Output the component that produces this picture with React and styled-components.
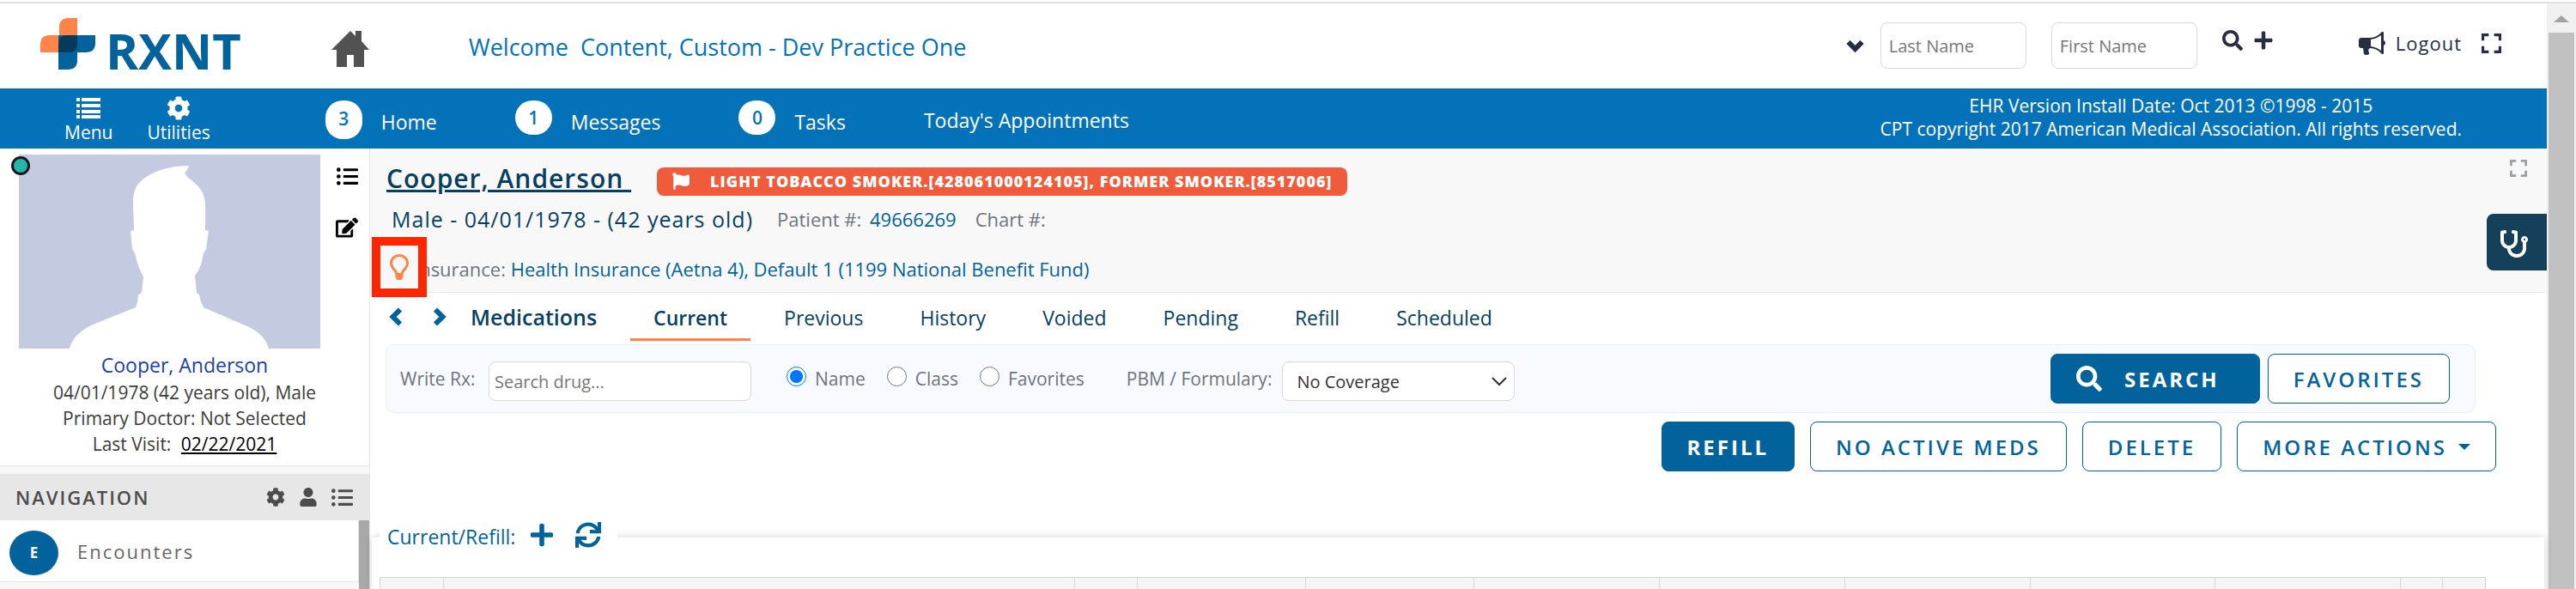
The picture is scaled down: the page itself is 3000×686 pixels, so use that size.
import React from "react";
import styled, { createGlobalStyle } from "styled-components";
import {
  FaCog,
  FaEdit,
  FaFlag,
  FaListUl,
  FaPlus,
  FaSearch,
  FaStethoscope,
  FaSync,
  FaUser,
} from "react-icons/fa";

const GlobalStyle = createGlobalStyle`
  * {
    box-sizing: border-box;
  }
  body {
    margin: 0;
    font-family: "Open Sans", "Noto Sans", sans-serif;
    font-size: 20px;
    color: #3c3c3c;
    background: white;
  }
  button, input, select {
    font-family: inherit;
    font-size: inherit;
  }
  a {
    color: inherit;
    text-decoration: none;
  }
  svg {
    display: block;
    flex-shrink: 0;
  }
`;

const Window = styled.div`
  display: flex;
  height: 100vh;
  overflow: hidden;
  padding-top: 4px;
  background: linear-gradient(white 2px, #dedee6 2px, #dedee6 4px, white 4px);
`;
const Page = styled.div`
  flex: 1;
  min-width: 0;
  display: flex;
  flex-direction: column;
`;

const ScrollTrack = styled.div`
  width: 34px;
  padding: 14px 2px 0;
  display: flex;
  flex-direction: column;
  align-items: center;
  gap: 12px;
  background: #f0f0f0;
`;
const ScrollThumb = styled.div`
  flex: 1;
  width: 100%;
  background: #c1c1c1;
`;

const Header = styled.header`
  height: 99px;
  flex-shrink: 0;
  padding: 0 53px 0 47px;
  display: flex;
  align-items: flex-start;
  color: #262f42;
`;
const Brand = styled.a`
  display: flex;
  gap: 12px;
  margin-top: 17px;
  color: #02639c;
`;
const BrandName = styled.span`
  margin-top: 8px;
  font-size: 58px;
  line-height: 60px;
  font-weight: 700;
`;
const HomeLink = styled.a`
  margin: 32px 0 0 105px;
  color: #525252;
`;
const Welcome = styled.div`
  margin: 30px auto 0 116px;
  font-size: 27px;
  line-height: 42px;
  white-space: pre;
  color: #0472b8;
`;
const PatientSearch = styled.form`
  display: flex;
  align-items: flex-start;
  margin-right: 99px;
`;
const IconButton = styled.button`
  display: flex;
  padding: 0;
  border: none;
  background: none;
  color: ${(props) => props.$color || "inherit"};
  cursor: pointer;
`;
const SearchMore = styled(IconButton)`
  margin: 43px 19px 0 0;
`;
const NameInput = styled.input`
  width: 170px;
  height: 54px;
  margin: 22px 29px 0 0;
  padding: 0 9px;
  border: 1px solid #d9d9d9;
  border-radius: 8px;
  &::placeholder {
    color: #777;
  }
`;
const SearchActions = styled.div`
  display: flex;
  gap: 12px;
  margin-top: 31px;
`;
const Account = styled.div`
  display: flex;
  align-items: center;
  gap: 12px;
  margin-top: 30px;
  height: 32px;
  font-size: 22px;
`;
const Logout = styled.a`
  margin-right: 11px;
  letter-spacing: 1px;
`;

const NavBar = styled.nav`
  height: 70px;
  flex-shrink: 0;
  padding: 0 99px 0 75px;
  display: flex;
  background: #0472b8;
  color: white;
  font-size: 21px;
`;
const Tools = styled.div`
  display: flex;
  gap: 40px;
  margin-right: 134px;
`;
const Tool = styled.a`
  display: flex;
  flex-direction: column;
  align-items: center;
  padding-top: 9px;
  line-height: 28px;
`;
const NavLinks = styled.div`
  display: flex;
  gap: 91px;
  margin-right: auto;
  padding-top: 14px;
`;
const NavLink = styled.a`
  display: flex;
  gap: 22px;
  font-size: 23px;
`;
const Badge = styled.span`
  width: 43px;
  height: ${(props) => (props.$tall ? 45 : 40)}px;
  padding-bottom: ${(props) => (props.$tall ? 3 : 0)}px;
  display: flex;
  align-items: center;
  justify-content: center;
  border-radius: 20px;
  background: white;
  color: #0472b8;
  font-size: 21px;
  font-weight: 600;
`;
const NavText = styled.span`
  padding-top: ${(props) => (props.$plain ? 6 : 8)}px;
  line-height: 34px;
`;
const Copyright = styled.div`
  padding-top: 7px;
  line-height: 27px;
  text-align: center;
`;

const Body = styled.div`
  flex: 1;
  min-height: 0;
  display: flex;
`;

const Sidebar = styled.aside`
  width: 431px;
  flex-shrink: 0;
  display: flex;
  flex-direction: column;
  background: #f7f7f7;
  border-right: 1px solid #e6e6e6;
`;
const PatientCard = styled.section`
  padding: 7px 0 10px;
  background: white;
  border-bottom: 1px solid #e6e6e6;
`;
const PhotoRow = styled.div`
  display: flex;
  padding-left: 22px;
`;
const Photo = styled.div`
  position: relative;
  width: 351px;
  background: #c4cbe0;
`;
const Status = styled.span`
  position: absolute;
  top: 2px;
  left: -9px;
  width: 22px;
  height: 22px;
  border: 3px solid #15171f;
  border-radius: 50%;
  background: #24b5ad;
`;
const PhotoActions = styled.div`
  display: flex;
  flex-direction: column;
  align-items: center;
  gap: 34px;
  margin-left: 18px;
  padding-top: 13px;
`;
const PatientInfo = styled.div`
  font-size: 21px;
  line-height: 30px;
  text-align: center;
`;
const SideName = styled.a`
  display: block;
  padding-top: 2px;
  font-size: 23px;
  line-height: 34px;
  color: #1a3fae;
`;
const VisitLink = styled.a`
  margin-left: 6px;
  color: black;
  text-decoration: underline;
`;
const SideHeader = styled.div`
  height: 54px;
  margin-top: 9px;
  padding: 0 19px 0 18px;
  display: flex;
  align-items: center;
  gap: 16px;
  background: #e7e7e7;
  color: #4c4c4c;
`;
const SideTitle = styled.h2`
  margin: 0 auto 0 0;
  font-size: 22px;
  font-weight: 600;
  letter-spacing: 2px;
`;
const SideScroll = styled.div`
  flex: 1;
  padding-right: 12px;
  background: linear-gradient(to left, #a9a9a9 12px, #f7f7f7 12px);
`;
const SideItem = styled.a`
  height: 72px;
  padding-left: 11px;
  display: flex;
  align-items: center;
  gap: 22px;
  background: white;
  border: solid #e6e6e6;
  border-width: 0 1px 1px 0;
  font-size: 22px;
  letter-spacing: 2px;
  color: #666;
`;
const Initial = styled.span`
  width: 57px;
  height: 52px;
  margin-top: 4px;
  display: flex;
  align-items: center;
  justify-content: center;
  border-radius: 50%;
  background: #02639c;
  color: white;
  font-size: 17px;
  font-weight: 700;
  letter-spacing: 0;
`;

const Main = styled.main`
  flex: 1;
  min-width: 0;
  display: flex;
  flex-direction: column;
`;
const PatientHeader = styled.section`
  position: relative;
  height: 168px;
  flex-shrink: 0;
  padding: 16px 0 0 19px;
  background: #f8f8f8;
  border-bottom: 1px solid #ededed;
  font-size: 22px;
`;
const PatientRow = styled.div`
  display: flex;
  align-items: center;
  height: 44px;
`;
const PatientName = styled.a`
  padding-bottom: 8px;
  font-size: 30px;
  font-weight: 600;
  letter-spacing: 1px;
  white-space: pre;
  text-decoration: underline;
  text-decoration-thickness: 3px;
  color: #063f61;
`;
const Alert = styled.div`
  height: 33px;
  margin-left: 30px;
  padding: 0 18px;
  display: flex;
  align-items: center;
  gap: 24px;
  border-radius: 8px;
  background: #f05b3b;
  color: white;
  font-size: 18px;
  font-weight: 800;
  letter-spacing: 1px;
`;
const Demographics = styled.span`
  margin: 0 28px 0 6px;
  font-size: 25px;
  font-weight: 500;
  letter-spacing: 1px;
  color: #063f61;
`;
const Field = styled.span`
  margin-right: 22px;
  color: #6c757d;
`;
const FieldLink = styled.a`
  margin-left: 4px;
  color: #02639c;
`;
const InsuranceRow = styled.div`
  padding: 20px 0 0 32px;
  line-height: 32px;
  color: #6c757d;
`;
const InsuranceLink = styled.a`
  color: #02639c;
`;
const Highlight = styled.div`
  position: absolute;
  left: 2px;
  top: 103px;
  width: 64px;
  height: 70px;
  display: flex;
  align-items: center;
  justify-content: center;
  border: 10px solid #ff2600;
  background: #f8f8f8;
`;
const ExpandCorner = styled.div`
  position: absolute;
  right: 23px;
  top: 13px;
`;
const ChartTab = styled.button`
  position: absolute;
  right: 0;
  top: 76px;
  width: 70px;
  height: 66px;
  display: flex;
  align-items: center;
  padding: 4px 0 0 16px;
  border: none;
  border-radius: 8px 0 0 8px;
  background: #15405a;
  color: white;
`;

const Tabs = styled.div`
  height: 56px;
  flex-shrink: 0;
  padding-left: 22px;
  display: flex;
  align-items: center;
  color: #063f61;
`;
const Arrows = styled.div`
  display: flex;
  gap: 37px;
  color: #02639c;
`;
const TabsTitle = styled.h1`
  margin: 0 39px 0 28px;
  font-size: 25px;
  line-height: 52px;
  font-weight: 600;
`;
const Tab = styled.a`
  height: 56px;
  margin-right: 12px;
  padding: 0 27px;
  border-bottom: 3px solid ${(props) => (props.$active ? "#ff8447" : "transparent")};
  font-size: 23px;
  font-weight: ${(props) => (props.$active ? 600 : 400)};
  line-height: 58px;
`;

const RxPanel = styled.form`
  height: 80px;
  flex-shrink: 0;
  margin: 4px 83px 0 18px;
  padding: 0 29px 0 16px;
  display: flex;
  align-items: center;
  border: 1px solid #e3effc;
  border-radius: 10px;
  background: #f7faff;
  color: #6c757d;
  font-size: 21px;
`;
const DrugLabel = styled.label`
  min-width: 91px;
`;
const DrugInput = styled.input`
  width: 306px;
  height: 46px;
  margin: 6px 41px 0 12px;
  padding: 0 6px;
  border: 1px solid #d9d9d9;
  border-radius: 8px;
  background: white;
  font-size: 20px;
  &::placeholder {
    color: #777;
  }
`;
const RadioLabel = styled.label`
  display: flex;
  gap: 10px;
  margin-right: 25px;
  line-height: 28px;
`;
const Radio = styled.input`
  appearance: none;
  width: 23px;
  height: 23px;
  margin: 0;
  border: 1px solid #767676;
  border-radius: 50%;
  background: white;
  &:checked {
    border: 1px solid #0075ff;
    background: radial-gradient(#0075ff 7px, white 8px);
  }
`;
const SelectLabel = styled.label`
  display: flex;
  align-items: center;
  gap: 12px;
  margin: 0 auto 0 24px;
`;
const SelectBox = styled.span`
  position: relative;
  margin-top: 6px;
  color: #333;
`;
const Select = styled.select`
  appearance: none;
  width: 271px;
  height: 46px;
  padding: 0 16px;
  display: block;
  border: 1px solid #d9d9d9;
  border-radius: 8px;
  background: white;
  color: #333;
  font-size: 20px;
`;
const SelectArrow = styled.svg`
  position: absolute;
  right: 9px;
  top: 17px;
  pointer-events: none;
`;

const Button = styled.button`
  height: 58px;
  padding: 0 29px;
  display: flex;
  align-items: center;
  gap: 13px;
  border: 1px solid #02639c;
  border-radius: 8px;
  background: ${(props) => (props.$primary ? "#02639c" : "white")};
  color: ${(props) => (props.$primary ? "white" : "#02639c")};
  font-size: 24px;
  font-weight: ${(props) => (props.$primary ? 700 : 600)};
  letter-spacing: 3px;
  white-space: nowrap;
  cursor: pointer;
`;
const SearchButton = styled(Button)`
  margin-right: 9px;
  padding: 0 46px 0 29px;
  gap: 26px;
`;
const Actions = styled.div`
  display: flex;
  justify-content: flex-end;
  gap: 18px;
  padding: 10px 59px 0 0;
`;

const RxList = styled.section`
  position: relative;
  flex: 1;
  margin: 77px 3px 0 2px;
  padding: 0 68px 0 9px;
  background: white;
  box-shadow: 0 0 10px rgba(0, 0, 0, 0.18);
`;
const Legend = styled.div`
  width: 277px;
  height: 46px;
  margin-top: -24px;
  padding-left: 9px;
  display: flex;
  align-items: center;
  background: white;
  font-size: 23px;
  color: #02639c;
`;
const LegendActions = styled.div`
  display: flex;
  gap: 24px;
  margin: -4px 0 0 16px;
`;
const Table = styled.table`
  width: 100%;
  margin-top: 24px;
  table-layout: fixed;
  border-collapse: separate;
  border-spacing: 0;
  border: 1px solid #cfd3d1;
`;
const Th = styled.th`
  width: ${(props) => props.$width};
  height: 60px;
  padding: 0;
  border-right: 1px solid #d6d9d7;
  background: #f4f6f5;
  &:last-child {
    border-right: none;
  }
`;

const columns = ["3%", "30%", "3%", "8%", "8%", "auto", "auto", "auto", "auto", "auto", "2%", "2%"];
const tabs = ["Current", "Previous", "History", "Voided", "Pending", "Refill", "Scheduled"];
const searchModes = ["Name", "Class", "Favorites"];

const Logo = () => (
  <svg width="64" height="60" viewBox="0 0 64 60">
    <path d="M22 40V11Q22 0 33 0H43V40Z" fill="#ff8447" />
    <path d="M0 40V31Q0 20 11 20H43V40Z" fill="#ff8447" />
    <path d="M21 20H64V29Q64 40 53 40H21Z" fill="#02639c" />
    <path d="M21 20H43V49Q43 60 32 60H21Z" fill="#02639c" />
    <path d="M21 40V30Q21 20 31 20H43V29Q43 40 33 40Z" fill="#063a5c" />
  </svg>
);

const HouseIcon = () => (
  <svg width="44" height="42" viewBox="0 0 44 42" fill="currentColor">
    <path d="M22 0L28 6V0H35V12L44 22H38V42H26V28H18V42H6V22H0Z" />
  </svg>
);

const MenuIcon = () => (
  <svg width="28" height="28" viewBox="0 0 28 28" fill="currentColor">
    {[2, 9, 16, 22].map((y) => (
      <path key={y} d={`M0 ${y}h4v4h-4zM6 ${y}h22v4h-22z`} />
    ))}
  </svg>
);

const BullhornIcon = () => (
  <svg width="31" height="27" viewBox="0 0 31 27">
    <path
      fill="currentColor"
      d="M3 7H13Q21 7 27 0H28Q29 0 29 1V10Q31 11 31 13Q31 15 29 16V25Q29 26 28 26H27Q21 19 13 19Q10 21 12 24V26Q9 28 6 26L5 19H3Q0 19 0 16V10Q0 7 3 7Z"
    />
    <path fill="white" d="M14 9Q21 8 26 4V22Q21 18 14 17Z" />
  </svg>
);

const ChevronLeft = () => (
  <svg width="15" height="22" viewBox="0 0 15 22" fill="none" stroke="currentColor" strokeWidth="6">
    <path d="M13 2.500L4.500 11L13 19.500" />
  </svg>
);

const ChevronRight = () => (
  <svg width="15" height="22" viewBox="0 0 15 22" fill="none" stroke="currentColor" strokeWidth="6">
    <path d="M2 2.500L10.500 11L2 19.500" />
  </svg>
);

const ChevronDown = () => (
  <svg width="21" height="15" viewBox="0 0 21 15" fill="none" stroke="currentColor" strokeWidth="6">
    <path d="M2.500 2L10.500 10L18.500 2" />
  </svg>
);

const ExpandIcon = ({ size, color }) => (
  <svg width={size} height={size} viewBox="0 0 22 22" fill="none" stroke={color || "currentColor"} strokeWidth="3">
    <path d="M1.500 8V1.500H8M14 1.500H20.500V8M20.500 14V20.500H14M8 20.500H1.500V14" />
  </svg>
);

const BulbIcon = () => (
  <svg width="22" height="30" viewBox="0 0 22 30">
    <path
      d="M8 23C7.500 19 1.500 16 1.500 10.500A9.500 9 0 0 1 20.500 10.500C20.500 16 14.500 19 14 23"
      fill="none"
      stroke="#ff8447"
      strokeWidth="3"
    />
    <path d="M6.500 22H15.500V27L13.500 30H8.500L6.500 27Z" fill="#ff8447" />
  </svg>
);

const Silhouette = () => (
  <svg width="351" height="226" viewBox="0 0 351 226">
    <path
      fill="white"
      d="M59 226C64 209 77 202 91 196L136 178Q139 171 139 163L143 161L145 142C140 134 138 126 135 115L132 110L130 89L134 88L133 57Q133 44 137 37C146 24 168 13 198 13L196 18L193 21L196 26C209 36 216 42 217 57L217 88L221 89L218 110L215 115C213 126 211 134 205 141L207 161L210 163Q211 171 215 178L259 197C277 204 287 212 291 226Z"
    />
  </svg>
);

const App = () => {
  return (
    <>
      <GlobalStyle />
      <Window>
        <Page>
          <Header>
            <Brand href="#">
              <Logo />
              <BrandName>RXNT</BrandName>
            </Brand>
            <HomeLink href="#" aria-label="Home">
              <HouseIcon />
            </HomeLink>
            <Welcome>{"Welcome  Content, Custom - Dev Practice One"}</Welcome>
            <PatientSearch>
              <SearchMore type="button" aria-label="More search options">
                <ChevronDown />
              </SearchMore>
              <NameInput placeholder="Last Name" aria-label="Last Name" />
              <NameInput placeholder="First Name" aria-label="First Name" />
              <SearchActions>
                <IconButton type="button" aria-label="Search patients">
                  <FaSearch size={24} />
                </IconButton>
                <IconButton type="button" aria-label="Add patient">
                  <FaPlus size={24} />
                </IconButton>
              </SearchActions>
            </PatientSearch>
            <Account>
              <BullhornIcon />
              <Logout href="#">Logout</Logout>
              <ExpandIcon size={23} />
            </Account>
          </Header>
          <NavBar>
            <Tools>
              <Tool href="#">
                <MenuIcon />
                Menu
              </Tool>
              <Tool href="#">
                <FaCog size={28} />
                Utilities
              </Tool>
            </Tools>
            <NavLinks>
              <NavLink href="#">
                <Badge $tall>3</Badge>
                <NavText>Home</NavText>
              </NavLink>
              <NavLink href="#">
                <Badge>1</Badge>
                <NavText>Messages</NavText>
              </NavLink>
              <NavLink href="#">
                <Badge>0</Badge>
                <NavText>Tasks</NavText>
              </NavLink>
              <NavLink href="#">
                <NavText $plain>Today's Appointments</NavText>
              </NavLink>
            </NavLinks>
            <Copyright>
              EHR Version Install Date: Oct 2013 ©1998 - 2015 <br />
              CPT copyright 2017 American Medical Association. All rights reserved.
            </Copyright>
          </NavBar>
          <Body>
            <Sidebar>
              <PatientCard>
                <PhotoRow>
                  <Photo>
                    <Silhouette />
                    <Status />
                  </Photo>
                  <PhotoActions>
                    <IconButton $color="black" aria-label="Patient list">
                      <FaListUl size={25} />
                    </IconButton>
                    <IconButton $color="black" aria-label="Edit patient">
                      <FaEdit size={26} />
                    </IconButton>
                  </PhotoActions>
                </PhotoRow>
                <PatientInfo>
                  <SideName href="#">Cooper, Anderson</SideName>
                  04/01/1978 (42 years old), Male
                  <br />
                  Primary Doctor: Not Selected
                  <br />
                  Last Visit: <VisitLink href="#">02/22/2021</VisitLink>
                </PatientInfo>
              </PatientCard>
              <SideHeader>
                <SideTitle>NAVIGATION</SideTitle>
                <FaCog size={22} />
                <FaUser size={22} />
                <FaListUl size={25} />
              </SideHeader>
              <SideScroll>
                <SideItem href="#">
                  <Initial>E</Initial>
                  Encounters
                </SideItem>
              </SideScroll>
            </Sidebar>
            <Main>
              <PatientHeader>
                <PatientRow>
                  <PatientName href="#">{"Cooper, Anderson "}</PatientName>
                  <Alert>
                    <FaFlag size={20} />
                    LIGHT TOBACCO SMOKER.[428061000124105], FORMER SMOKER.[8517006]
                  </Alert>
                </PatientRow>
                <PatientRow>
                  <Demographics>Male - 04/01/1978 - (42 years old)</Demographics>
                  <Field>
                    Patient #: <FieldLink href="#">49666269</FieldLink>
                  </Field>
                  <Field>Chart #:</Field>
                </PatientRow>
                <InsuranceRow>
                  Insurance:{" "}
                  <InsuranceLink href="#">
                    Health Insurance (Aetna 4), Default 1 (1199 National Benefit Fund)
                  </InsuranceLink>
                </InsuranceRow>
                <Highlight>
                  <BulbIcon />
                </Highlight>
                <ExpandCorner>
                  <ExpandIcon size={20} color="#9aa0a5" />
                </ExpandCorner>
                <ChartTab aria-label="Open chart">
                  <FaStethoscope size={32} />
                </ChartTab>
              </PatientHeader>
              <Tabs>
                <Arrows>
                  <IconButton aria-label="Previous section">
                    <ChevronLeft />
                  </IconButton>
                  <IconButton aria-label="Next section">
                    <ChevronRight />
                  </IconButton>
                </Arrows>
                <TabsTitle>Medications</TabsTitle>
                {tabs.map((tab) => (
                  <Tab key={tab} href="#" $active={tab === "Current"}>
                    {tab}
                  </Tab>
                ))}
              </Tabs>
              <RxPanel>
                <DrugLabel htmlFor="drug">Write Rx:</DrugLabel>
                <DrugInput id="drug" placeholder="Search drug..." />
                {searchModes.map((mode) => (
                  <RadioLabel key={mode}>
                    <Radio type="radio" name="mode" defaultChecked={mode === "Name"} />
                    {mode}
                  </RadioLabel>
                ))}
                <SelectLabel>
                  PBM / Formulary:
                  <SelectBox>
                    <Select>
                      <option>No Coverage</option>
                    </Select>
                    <SelectArrow width="18" height="12" viewBox="0 0 18 12">
                      <path d="M1 2L9 10L17 2" fill="none" stroke="currentColor" strokeWidth="2" />
                    </SelectArrow>
                  </SelectBox>
                </SelectLabel>
                <SearchButton type="button" $primary>
                  <FaSearch size={30} />
                  SEARCH
                </SearchButton>
                <Button type="button">FAVORITES</Button>
              </RxPanel>
              <Actions>
                <Button $primary>REFILL</Button>
                <Button>NO ACTIVE MEDS</Button>
                <Button>DELETE</Button>
                <Button>
                  MORE ACTIONS
                  <svg width="14" height="7" viewBox="0 0 14 7" fill="currentColor">
                    <path d="M0 0H14L7 7Z" />
                  </svg>
                </Button>
              </Actions>
              <RxList>
                <Legend>
                  Current/Refill:
                  <LegendActions>
                    <IconButton $color="#02639c" aria-label="Add medication">
                      <FaPlus size={30} />
                    </IconButton>
                    <IconButton $color="#02639c" aria-label="Refresh list">
                      <FaSync size={30} />
                    </IconButton>
                  </LegendActions>
                </Legend>
                <Table>
                  <thead>
                    <tr>
                      {columns.map((width, i) => (
                        <Th key={i} $width={width} />
                      ))}
                    </tr>
                  </thead>
                </Table>
              </RxList>
            </Main>
          </Body>
        </Page>
        <ScrollTrack>
          <svg width="18" height="8" viewBox="0 0 18 8" fill="#a3a3a3">
            <path d="M9 0L18 8H0Z" />
          </svg>
          <ScrollThumb />
        </ScrollTrack>
      </Window>
    </>
  );
};

export default App;
